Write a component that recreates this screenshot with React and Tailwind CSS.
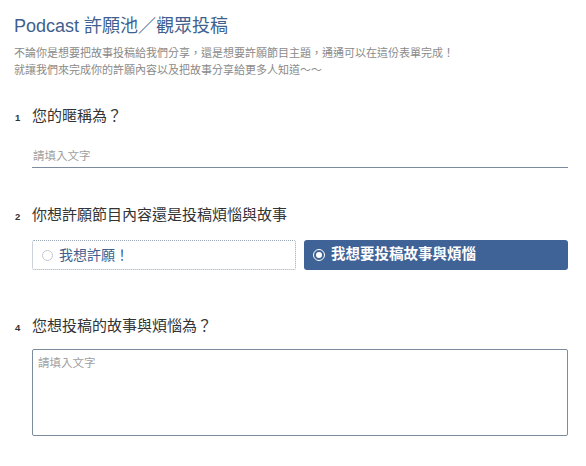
export default function App() {
  return (
    <div className="min-h-[466px] w-[586px] bg-white font-['Helvetica','Liberation_Sans','Noto_Sans_CJK_TC',sans-serif]">
      <div className="px-[14px] pt-[13px]">
        <h1 className="text-[18px] leading-[26px] text-[#3f5f8f]">Podcast 許願池／觀眾投稿</h1>
        <p className="mt-[6px] text-[11px] leading-[17px] text-[#8a8a8a]">
          不論你是想要把故事投稿給我們分享，還是想要許願節目主題，通通可以在這份表單完成！
          <br />
          就讓我們來完成你的許願內容以及把故事分享給更多人知道〜〜
        </p>
      </div>

      <div className="mt-[26px] pl-[15px] pr-[18px]">
        <div className="flex items-baseline">
          <span className="w-[17px] text-[9.5px] font-bold text-[#333]">1</span>
          <span className="text-[15px] text-[#333]">您的暱稱為？</span>
        </div>
        <div className="ml-[17px] mt-[20px] border-b border-[#7d8c9c] pb-[3px] pl-[1px] text-[11.5px] leading-[16px] text-[#a0a0a0]">
          請填入文字
        </div>
      </div>

      <div className="mt-[36px] pl-[15px] pr-[18px]">
        <div className="flex items-baseline">
          <span className="w-[17px] text-[9.5px] font-bold text-[#333]">2</span>
          <span className="text-[15px] text-[#333]">你想許願節目內容還是投稿煩惱與故事</span>
        </div>
        <div className="ml-[17px] mt-[14px] grid grid-cols-2 gap-[8px]">
          <div className="flex h-[30px] items-center gap-[6px] rounded-[2px] border border-dotted border-[#9aa6b4] px-[9px]">
            <span className="h-[11px] w-[11px] rounded-full border border-[#c4c9cf]" />
            <span className="text-[14px] text-[#3f5f8f]">我想許願！</span>
          </div>
          <div className="flex h-[30px] items-center gap-[6px] rounded-[3px] bg-[#3f6396] px-[9px]">
            <span className="flex h-[12px] w-[12px] items-center justify-center rounded-full border-[1.5px] border-white">
              <span className="h-[6px] w-[6px] rounded-full bg-white" />
            </span>
            <span className="text-[14.5px] font-bold text-white">我想要投稿故事與煩惱</span>
          </div>
        </div>
      </div>

      <div className="mt-[45px] pl-[15px] pr-[18px]">
        <div className="flex items-baseline">
          <span className="w-[17px] text-[9.5px] font-bold text-[#333]">4</span>
          <span className="text-[15px] text-[#333]">您想投稿的故事與煩惱為？</span>
        </div>
        <div className="ml-[17px] mt-[11px] h-[87px] rounded-[2px] border border-[#7d8c9c] px-[5px] py-[5px] text-[11.5px] leading-[16px] text-[#a0a0a0]">
          請填入文字
        </div>
      </div>
    </div>
  );
}
